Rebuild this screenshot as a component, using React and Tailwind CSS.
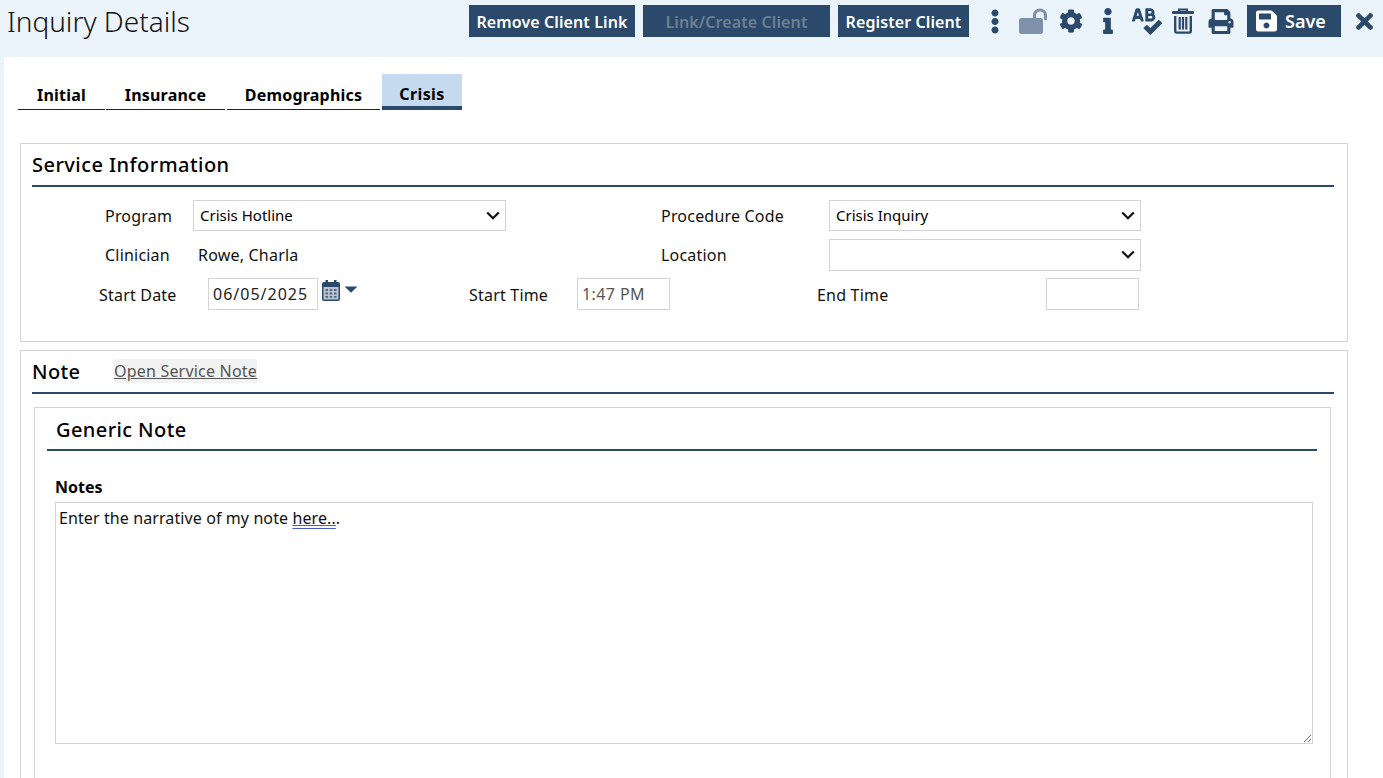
import React from "react";
import {
  FaEllipsisV,
  FaCog,
  FaInfo,
  FaSpellCheck,
  FaPrint,
  FaSave,
  FaTimes,
} from "react-icons/fa";

const tabs = [
  { name: "Initial", width: "w-[87px] mr-[1px]" },
  { name: "Insurance", width: "w-[119px] mr-[2px]" },
  { name: "Demographics", width: "w-[153px] mr-[1px]" },
];

function HeaderButton({ children, disabled, width }) {
  return (
    <button
      className={`h-[32px] ${width} bg-[#2b4a6b] pt-[1px] text-[16px] font-semibold tracking-[0.1px] ${
        disabled ? "text-[#6f7f93]" : "text-white"
      }`}
    >
      {children}
    </button>
  );
}

function NativeSelect({ value, width, height }) {
  return (
    <div className={`relative ${width} ${height}`}>
      <select
        defaultValue={value}
        className={`h-full w-full appearance-none border border-[#d4d4d4] bg-white pl-[6px] text-[15px] tracking-normal text-black`}
      >
        <option>{value}</option>
      </select>
      {/* chevron sits over the select */}
      <svg viewBox="0 0 14 9" className="pointer-events-none absolute right-[6px] top-[11px] h-[9px] w-[14px]">
        <path d="M1.2 1.5L7 7.2L12.8 1.5" fill="none" stroke="#111" strokeWidth="2.2" />
      </svg>
    </div>
  );
}

function TextBox({ value, width, className = "" }) {
  return (
    <input
      readOnly
      value={value}
      className={`${width} h-[32px] border border-[#d4d4d4] bg-white px-[4px] text-[16px] ${className}`}
    />
  );
}

function UnlockIcon() {
  return (
    <svg viewBox="0 0 28 26" className="ml-[17px] h-[26px] w-[28px]">
      <path d="M15.5 14V7.5a5.5 5.5 0 0 1 11 0V12" fill="none" stroke="#7d92aa" strokeWidth="3.2" />
      <rect x="0" y="10" width="24" height="16" rx="2.5" fill="#7d92aa" />
    </svg>
  );
}

function TrashIcon() {
  return (
    <svg viewBox="0 0 22 26" className="ml-[10px] h-[26px] w-[22px] text-[#2b4a6b]" fill="currentColor">
      <path d="M7 4V1.6h8V4" fill="none" stroke="currentColor" strokeWidth="2" />
      <rect x="0" y="3" width="22" height="3" rx="1" />
      <path d="M3.2 8v15a1.6 1.6 0 0 0 1.6 1.6h12.4a1.6 1.6 0 0 0 1.6-1.6V8" fill="none" stroke="currentColor" strokeWidth="2.4" />
      <rect x="6.6" y="9" width="2.2" height="12.5" />
      <rect x="9.9" y="9" width="2.2" height="12.5" />
      <rect x="13.2" y="9" width="2.2" height="12.5" />
    </svg>
  );
}

function CalendarIcon() {
  return (
    <svg viewBox="0 0 18 21" className="mb-[8px] ml-[4px] h-[21px] w-[18px]">
      <rect x="0" y="2" width="18" height="19" rx="2" fill="#2b4a6b" />
      <rect x="3.5" y="0" width="2.5" height="4" fill="#2b4a6b" />
      <rect x="12" y="0" width="2.5" height="4" fill="#2b4a6b" />
      <rect x="1.5" y="7" width="15" height="12.5" fill="#b9c4d0" />
      <path d="M3.5 9h2.5v2H3.5zM7.7 9h2.5v2H7.7zM12 9h2.5v2H12zM3.5 12.5h2.5v2H3.5zM7.7 12.5h2.5v2H7.7zM12 12.5h2.5v2H12zM3.5 16h2.5v1.8H3.5zM7.7 16h2.5v1.8H7.7zM12 16h2.5v1.8H12z" fill="#51667f" />
    </svg>
  );
}

export default function App() {
  return (
    <div className="h-[778px] w-[1383px] overflow-hidden bg-[#ebf3fb] font-['Noto_Sans',sans-serif] text-[16px] tracking-[0.2px] text-[#111]">
      {/* Header */}
      <div className="flex h-[57px] items-start">
        <h1 className="ml-[7px] mt-[3px] w-[462px] text-[28px] font-light leading-[36px] tracking-normal text-[#111]">Inquiry Details</h1>
        <div className="mt-[5px] flex items-center">
          <HeaderButton width="w-[166px]">Remove Client Link</HeaderButton>
          <div className="w-[8px]" />
          <HeaderButton width="w-[187px]" disabled>
            Link/Create Client
          </HeaderButton>
          <div className="w-[8px]" />
          <HeaderButton width="w-[131px]">Register Client</HeaderButton>
          <FaEllipsisV className="ml-[19px] h-[25px] w-[14px] text-[#2b4a6b]" />
          <UnlockIcon />
          <FaCog className="ml-[12px] h-[24px] w-[24px] text-[#2b4a6b]" />
          <FaInfo className="ml-[19px] h-[26px] w-[12px] text-[#2b4a6b]" />
          <FaSpellCheck className="ml-[18px] h-[27px] w-[30px] text-[#2b4a6b]" />
          <TrashIcon />
          <FaPrint className="ml-[14px] h-[25px] w-[26px] text-[#2b4a6b]" />
          <button className="ml-[13px] flex h-[32px] w-[94px] items-center bg-[#2b4a6b] pl-[8px] text-[18px] font-semibold tracking-normal text-white">
            <FaSave className="mr-[7px] h-[24px] w-[23px]" />
            Save
          </button>
          <FaTimes className="ml-[15px] h-[25px] w-[17px] text-[#2b4a6b]" />
        </div>
      </div>

      {/* Content */}
      <div className="ml-[4px] h-[721px] bg-white pl-[14px] pt-[17px]">
        <div className="flex items-end">
          {tabs.map((tab) => (
            <div
              key={tab.name}
              className={`${tab.width} h-[36px] border-b border-[#222] pt-[9px] text-center font-bold leading-[24px] text-black`}
            >
              {tab.name}
            </div>
          ))}
          <div className="ml-[1px] h-[36px] w-[80px] border-b-[4px] border-[#2b4a6b] bg-[#c5daef] pt-[8px] text-center font-bold leading-[24px] tracking-[0.4px] text-black">
            Crisis
          </div>
        </div>

        {/* Service Information */}
        <div className="ml-[2px] mt-[33px] h-[199px] w-[1328px] border border-[#d4d4d4]">
          <div className="ml-[11px] mr-[13px] h-[43px] border-b-2 border-[#2b4a6b] pt-[6px] text-[20px] font-medium leading-[30px] tracking-[0.45px] text-black">
            Service Information
          </div>
          <div className="mt-[13px] flex items-center">
            <span className="ml-[84px] w-[88px]">Program</span>
            <NativeSelect value="Crisis Hotline" width="w-[313px]" height="h-[31px]" />
            <span className="ml-[155px] w-[168px]">Procedure Code</span>
            <NativeSelect value="Crisis Inquiry" width="w-[312px]" height="h-[31px]" />
          </div>
          <div className="mt-[8px] flex items-center">
            <span className="ml-[84px] w-[93px]">Clinician</span>
            <span className="w-[463px]">Rowe, Charla</span>
            <span className="w-[168px]">Location</span>
            <NativeSelect value="" width="w-[312px]" height="h-[32px]" />
          </div>
          <div className="mt-[7px] flex items-center">
            <span className="ml-[78px] mt-[2px] w-[109px]">Start Date</span>
            <TextBox value="06/05/2025" width="w-[110px]" className="tracking-[1px] text-[#222]" />
            <CalendarIcon />
            <svg viewBox="0 0 14 7" className="mb-[10px] ml-[4px] h-[7px] w-[14px]">
              <path d="M0.5 0.5h13L7 6.8z" fill="#2b4a6b" />
            </svg>
            <span className="ml-[111px] mt-[2px] w-[108px]">Start Time</span>
            <TextBox value="1:47 PM" width="w-[93px]" className="tracking-[0.4px] text-[#555]" />
            <span className="ml-[147px] mt-[2px] w-[229px]">End Time</span>
            <TextBox value="" width="w-[93px]" />
          </div>
        </div>

        {/* Note */}
        <div className="ml-[2px] mt-[8px] h-[500px] w-[1328px] border border-[#d4d4d4]">
          <div className="ml-[11px] mr-[13px] flex h-[43px] items-center border-b-2 border-[#2b4a6b]">
            <span className="w-[82px] text-[20px] font-medium tracking-[0.4px] text-black">Note</span>
            <a className="mb-[2px] bg-[#f2f2f2] text-[#555] underline">Open Service Note</a>
          </div>
          <div className="ml-[13px] mt-[13px] h-[400px] w-[1297px] border border-[#d4d4d4]">
            <div className="ml-[12px] mr-[13px] h-[43px] border-b-2 border-[#2b4a6b] pl-[9px] pt-[7px] text-[20px] font-medium leading-[30px] tracking-[0.4px] text-black">
              Generic Note
            </div>
            <div className="ml-[20px] mt-[24px] font-bold leading-[24px] tracking-normal text-black">Notes</div>
            <div className="relative ml-[20px] mt-[3px] h-[242px] w-[1258px]">
              <textarea readOnly className="block h-full w-full border border-[#d4d4d4]" />
              {/* text over the box so the spell-check underline can show */}
              <div className="pointer-events-none absolute left-[4px] top-[5px] leading-[22px] tracking-[0.1px] text-[#111]">
                Enter the narrative of my note{" "}
                <span className="underline decoration-[#4a5fc1] decoration-double">here..</span>.
              </div>
            </div>
          </div>
        </div>
      </div>
    </div>
  );
}
